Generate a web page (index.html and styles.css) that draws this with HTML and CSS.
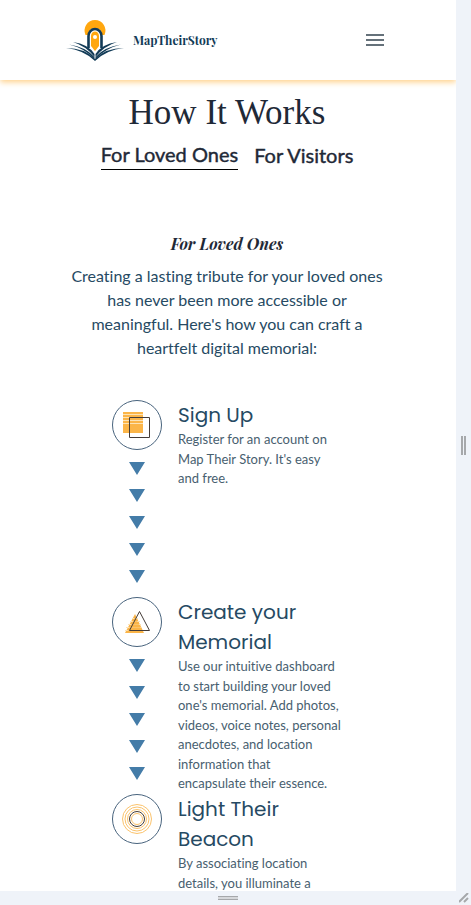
FILE: index.html
```html
<!DOCTYPE html>
<html lang="en">
<head>
<meta charset="utf-8">
<meta name="viewport" content="width=device-width, initial-scale=1">
<title>MapTheirStory</title>
<link rel="stylesheet" href="styles.css">
</head>
<body>
<div class="device">
  <div class="screen">
    <header class="header">
      <a class="brand" href="#">
        <svg class="brand-logo" viewBox="0 0 58 44" aria-hidden="true">
          <path fill="#ffa70f" d="M19.500 17A10.500 10.500 0 1 1 38.500 17L36 17Q35 10 29 10Q23 10 22 17Z"/>
          <path fill="none" stroke="#123b57" stroke-width="2.600" d="M22.500 30V18a6.500 7 0 0 1 13 0V30"/>
          <path fill="#ffa70f" d="M25 28V18a4 4.500 0 0 1 8 0V28l-4 5z"/>
          <circle cx="29" cy="19" r="2" fill="#fff"/>
          <path fill="#123b57" d="M7 24Q22 26 28.500 36V39Q20 28 7 24ZM51 24Q36 26 29.500 36V39Q38 28 51 24Z"/>
          <path fill="#123b57" d="M3 26.500Q20 29 28.500 39V41Q18 30 3 26.500ZM55 26.500Q38 29 29.500 39V41Q40 30 55 26.500Z"/>
          <path fill="#123b57" d="M0 30Q19 30 29 41Q39 30 58 30Q40 32 29 43Q18 32 0 30Z"/>
        </svg>
        <span class="brand-name">MapTheirStory</span>
      </a>
      <button class="menu" type="button" aria-label="Menu">
        <svg viewBox="0 0 20 14" aria-hidden="true"><path d="M1 2h18M1 7h18M1 12h18"/></svg>
      </button>
    </header>
    <main class="main">
      <h1 class="title">How It Works</h1>
      <nav class="tabs">
        <a class="tab tab-active" href="#loved">For Loved Ones</a>
        <a class="tab" href="#visitors">For Visitors</a>
      </nav>
      <section class="intro" id="loved">
        <h2 class="intro-title">For Loved Ones</h2>
        <p class="intro-text">Creating a lasting tribute for your loved ones has never been more accessible or meaningful. Here's how you can craft a heartfelt digital memorial:</p>
      </section>
      <ol class="steps">
        <li class="step">
          <div class="rail">
            <svg class="badge" viewBox="0 0 50 50" aria-hidden="true">
              <circle class="ring" cx="25" cy="25" r="24.500"/>
              <path fill="#fbb548" d="M11 12h20v21H11z"/>
              <path stroke="#fde3b5" d="M11 14.500h20M11 17.500h20M11 20.500h20M11 23.500h20"/>
              <path fill="none" stroke="#443c38" d="M17.500 17.500h20v20h-20z"/>
            </svg>
            <svg class="arrows" viewBox="0 0 16 121" aria-hidden="true"><path d="M0 0h16l-8 13zM0 27h16l-8 13zM0 54h16l-8 13zM0 81h16l-8 13zM0 108h16l-8 13z"/></svg>
          </div>
          <div class="step-body">
            <h3 class="step-title">Sign Up</h3>
            <p class="step-text">Register for an account on Map Their Story. It's easy and free.</p>
          </div>
        </li>
        <li class="step">
          <div class="rail">
            <svg class="badge" viewBox="0 0 50 50" aria-hidden="true">
              <circle class="ring" cx="25" cy="25" r="24.500"/>
              <path fill="#fbb548" d="M23 17l9 19H13z"/>
              <path stroke="#fde3b5" d="M20 21.500h6M18 24.500h10M16 27.500h13M14 30.500h16M13 33.500h19"/>
              <path fill="#fbb548" opacity=".7" d="M23 20l8 15H15z"/>
              <path fill="none" stroke="#443c38" d="M27.500 14.500l10 19h-20z"/>
            </svg>
            <svg class="arrows" viewBox="0 0 16 121" aria-hidden="true"><path d="M0 0h16l-8 13zM0 27h16l-8 13zM0 54h16l-8 13zM0 81h16l-8 13zM0 108h16l-8 13z"/></svg>
          </div>
          <div class="step-body">
            <h3 class="step-title">Create your Memorial</h3>
            <p class="step-text">Use our intuitive dashboard to start building your loved one's memorial. Add photos, videos, voice notes, personal anecdotes, and location information that encapsulate their essence.</p>
          </div>
        </li>
        <li class="step">
          <div class="rail">
            <svg class="badge" viewBox="0 0 50 50" aria-hidden="true">
              <circle class="ring" cx="25" cy="25" r="24.500"/>
              <g fill="none" stroke="#fbc36c"><circle cx="25" cy="25" r="14.500"/><circle cx="25" cy="25" r="12"/><circle cx="25" cy="25" r="9.500"/><circle cx="25" cy="25" r="5.500"/></g>
              <circle cx="25" cy="25" r="7.500" fill="none" stroke="#443c38"/>
            </svg>
          </div>
          <div class="step-body">
            <h3 class="step-title">Light Their Beacon</h3>
            <p class="step-text">By associating location details, you illuminate a</p>
          </div>
        </li>
      </ol>
    </main>
  </div>
  <div class="handle handle-side"><span class="grip grip-side"></span></div>
  <div class="handle handle-bottom"><span class="grip grip-bottom"></span></div>
  <div class="handle handle-corner">
    <svg viewBox="0 0 10 10" aria-hidden="true"><path d="M0 9L9 0M5 9L9 5"/></svg>
  </div>
</div>
</body>
</html>
```
FILE: styles.css
```css
* { box-sizing: border-box; }

body, h1, h2, h3, p, ol { margin: 0; padding: 0; }

body {
  background: #eff3f9;
  color: #1f2937;
  font-family: Lato, "Liberation Sans", sans-serif;
  font-variant-ligatures: none;
}

a { color: inherit; text-decoration: none; }

svg { display: block; }

.device {
  display: grid;
  grid-template: minmax(0, 1fr) 14px / minmax(0, 1fr) 15px;
  height: 100vh;
}

.screen {
  overflow: hidden;
  background: #fff;
}

.header {
  display: flex;
  align-items: center;
  justify-content: space-between;
  height: 80px;
  padding: 0 71px 0 66px;
  box-shadow: 0 2px 6px #ffcf85;
}

.brand {
  display: flex;
  align-items: center;
  gap: 9px;
}

.brand-logo { width: 58px; height: 44px; }

.brand-name {
  color: #123b57;
  font-family: "Playfair Display", "Liberation Serif", serif;
  font-size: 12px;
  font-weight: 700;
  line-height: 18px;
}

.menu {
  padding: 0;
  border: 0;
  background: none;
}

.menu svg {
  width: 20px;
  height: 14px;
  fill: none;
  stroke: #33434f;
  stroke-width: 1.5;
}

.main { padding: 13px 66px 0 64px; }

.title {
  font-family: "Liberation Serif", serif;
  font-size: 35px;
  font-weight: 400;
  line-height: 40px;
  text-align: center;
}

.tabs {
  display: flex;
  justify-content: center;
  gap: 16px;
  margin-top: 7px;
}

.tab {
  height: 30px;
  font-size: 20px;
  font-weight: 400;
  line-height: 30px;
  -webkit-text-stroke: thin;
}

.tab-active {
  border-bottom: 1px solid #000;
  line-height: 29px;
}

.intro {
  margin-top: 62px;
  padding: 0 6px;
  text-align: center;
}

.intro-title {
  font-family: "Playfair Display", "Liberation Serif", serif;
  font-size: 16px;
  font-style: italic;
  font-weight: 700;
  line-height: 24px;
}

.intro-text {
  margin-top: 8px;
  color: #264a63;
  font-size: 16px;
  line-height: 24px;
}

.steps {
  margin: 40px 48px 0;
  list-style: none;
}

.step {
  display: flex;
  gap: 16px;
  height: 197px;
}

.rail {
  display: flex;
  flex: none;
  flex-direction: column;
  align-items: center;
  gap: 12px;
}

.badge { width: 50px; height: 50px; }

.ring { fill: none; stroke: #48637d; }

.arrows {
  width: 16px;
  height: 121px;
  fill: #447ca8;
}

.step-body { max-width: 163px; }

.step-title {
  color: #264a63;
  font-family: Poppins, Inter, sans-serif;
  font-size: 20px;
  font-weight: 400;
  line-height: 30px;
}

.step-text {
  color: #48606f;
  font-size: 13px;
  line-height: 1.5;
}

.handle {
  display: flex;
  align-items: center;
  justify-content: center;
}

.grip { border: 0 solid #a6a8ab; }

.grip-side {
  width: 5px;
  height: 19px;
  border-width: 0 2px;
}

.grip-bottom {
  width: 20px;
  height: 4px;
  border-width: 1px 0;
  background: #d6d8db;
}

.handle-corner svg {
  width: 10px;
  height: 10px;
  fill: none;
  stroke: #a6a8ab;
  stroke-width: 2;
}
```
